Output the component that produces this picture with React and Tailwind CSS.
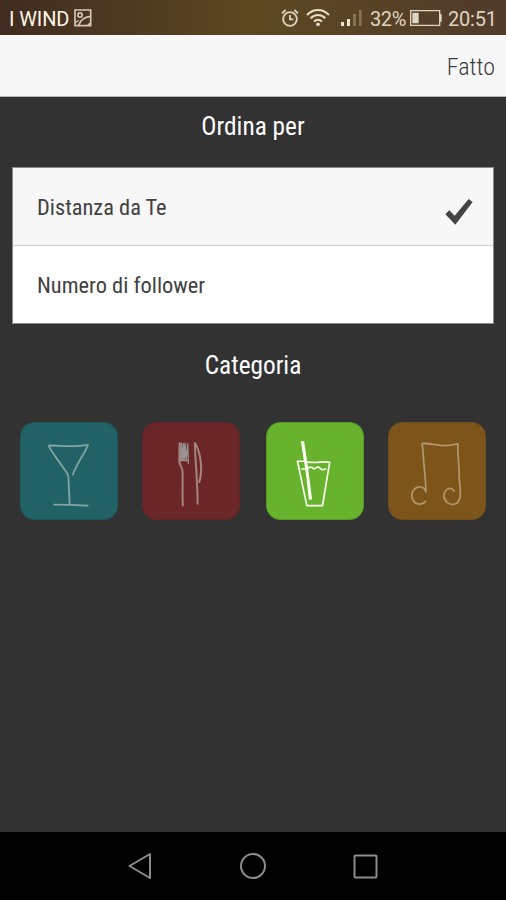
import React, { useState } from 'react';

const CocktailIcon = () => (
  <svg viewBox="30 36 294 294" className="w-full h-full" fill="none" stroke="#86a3a3" strokeWidth="5.5" strokeLinecap="round" strokeLinejoin="round">
    <path d="M189 194 C196 174 208 153 219 135 C225 124 232 113 235 103 C218 106 195 107 176 107 C155 107 135 104 115 105 C117 113 125 123 134 137 L164 179 C171 188 174 192 175 200 C176 228 178 256 179 285" />
    <path d="M132 286 C166 286 200 287 234 289" />
  </svg>
);

const CutleryIcon = () => (
  <svg viewBox="31 36 294 294" className="w-full h-full" fill="none" stroke="#a58482" strokeWidth="6" strokeLinecap="round" strokeLinejoin="round">
    <path stroke="#999292" strokeWidth="4" d="M143 98 L143 160 M143 100 L147 150 L149 98 L152 150 L155 99 L157 150 L160 98 L163 152 L168 99 L170 160 M145 150 L168 151" />
    <path d="M143 98 L142 154 C144 166 151 172 152 182 C153 216 151 252 153 289" />
    <path d="M203 217 C210 200 211 167 206 142 C202 121 196 106 190 97 C190 126 193 160 195 193 C196 225 199 254 198 283" />
  </svg>
);

const DrinkIcon = () => (
  <svg viewBox="32 36 294 294" className="w-full h-full" fill="none" stroke="#fafff2" strokeWidth="5" strokeLinecap="round" strokeLinejoin="round">
    <path d="M147 153 L125 153 L129 170 L154 289 L202 289 L224 156 C208 153 194 157 180 157 L154 156" />
    <path d="M139 177 L156 176 C161 170 168 169 174 175 C178 180 184 169 189 171 C195 173 196 179 203 179 L212 177" />
    <path fill="#fafff2" strokeWidth="4" d="M138 94 L144 94 L154 160 L168 268 L162 269 L153 190 Z" />
  </svg>
);

const MusicIcon = () => (
  <svg viewBox="30 36 294 294" className="w-full h-full" fill="none" stroke="#b1946a" strokeWidth="5.5" strokeLinecap="round" strokeLinejoin="round">
    <path d="M142 276 C133 287 115 287 106 276 C96 264 99 246 109 237 C121 227 140 231 143 247 C143 204 135 156 134 120 L131 99 C157 97 180 106 205 105 C218 104 231 102 241 100 C239 128 245 164 245 195 C245 226 253 251 246 268 C241 287 221 290 208 279 C195 268 196 249 207 240 C216 233 225 237 230 244" />
  </svg>
);

const AlarmIcon = () => (
  <svg viewBox="0 0 54 54" className="w-[18px] h-[18px]" fill="none" stroke="#dfd5bd" strokeWidth="5.5">
    <circle cx="27" cy="30" r="20.5" />
    <path d="M27 18 V31 H37 M3 13 L14 3 M40 3 L51 13" />
  </svg>
);

const WifiIcon = () => (
  <svg viewBox="0 0 72 54" className="w-6 h-[18px]" fill="none" stroke="#e8dec8" strokeWidth="6">
    <path d="M3 18 C22 -2 50 -2 69 18 M14 28 C26 15 46 15 58 28 M24 38 C31 30 41 30 48 38" />
    <circle cx="36" cy="46" r="5.5" fill="#e8dec8" stroke="none" />
  </svg>
);

const SignalIcon = () => (
  <svg viewBox="0 0 63 54" className="w-[21px] h-[18px]">
    <path fill="#eee5cf" d="M0 39 H9 V51 H0 Z M18 30 H27 V51 H18 Z" />
    <path fill="#85734b" d="M36 15 H45 V51 H36 Z M54 3 H62 V51 H54 Z" />
  </svg>
);

const BatteryIcon = () => (
  <svg viewBox="0 0 96 48" className="w-8 h-4">
    <path fill="none" stroke="#ded4c0" strokeWidth="4" d="M2 2 H89 V46 H2 Z" />
    <path fill="#ded4c0" d="M7 8 H26 V40 H7 Z M90 13 H95 V35 H90 Z" />
  </svg>
);

const PictureIcon = () => (
  <svg viewBox="0 0 54 54" className="w-[18px] h-[18px]" fill="none" stroke="#d3c7b5" strokeWidth="5">
    <path d="M3 3 H50 V50 H3 Z M14 49 C19 33 32 24 49 22" />
    <path d="M3 42 L14 34" strokeWidth="3.5" />
    <path d="M36 50 L50 38 V50 Z" fill="#d3c7b5" stroke="none" />
    <circle cx="18" cy="18" r="6.5" />
  </svg>
);

const categories = [
  { id: 'cocktail', icon: CocktailIcon, style: 'bg-[#206265] border-[#205659]' },
  { id: 'food', icon: CutleryIcon, style: 'bg-[#6b2727] border-[#602626]' },
  { id: 'drink', icon: DrinkIcon, style: 'bg-[#67b32d] border-[#579827] ml-0.5' },
  { id: 'music', icon: MusicIcon, style: 'bg-[#7d551b] border-[#714e1d]' },
];

const sortOptions = ['Distanza da Te', 'Numero di follower'];

const App = () => {
  const [selected, setSelected] = useState(0);

  return (
    <div className="w-[506px] h-[900px] flex flex-col overflow-hidden bg-[#323232] font-['Roboto','Liberation_Sans',sans-serif]">
      {/* Status bar */}
      <div className="h-[35px] shrink-0 flex items-center pl-[9px] pr-[10px] pt-[1px] bg-linear-to-r from-[#402c20] via-[#5c4820] to-[#513b2b]">
        <span className="w-[60px] mt-px text-[20px] leading-none tracking-[-0.1px] text-[#fdf6e8] whitespace-nowrap">I WIND</span>
        <div className="ml-[5px]"><PictureIcon /></div>
        <div className="ml-auto flex items-center text-[#ded4c0] text-[20px] leading-none">
          <AlarmIcon />
          <div className="ml-[7px]"><WifiIcon /></div>
          <div className="ml-[11px]"><SignalIcon /></div>
          <span className="ml-2 w-[38px] mt-px tracking-[-0.4px]">32%</span>
          <div className="ml-[2px]"><BatteryIcon /></div>
          <span className="ml-[6px] w-[48px] mt-px tracking-[-0.2px]">20:51</span>
        </div>
      </div>

      {/* Header */}
      <div className="h-[62px] shrink-0 flex items-center justify-end pt-[2px] pr-[11px] bg-[#f7f7f7] border-b border-[#b5b5b5]">
        <button className="text-[24px] leading-none font-light text-[#3c3c3c] [font-stretch:75%]">Fatto</button>
      </div>

      <main className="flex-1 [font-stretch:75%]">
        <h2 className="h-[70px] pt-[15px] text-center text-[25.3px] leading-[30px] text-white">Ordina per</h2>

        <div className="mx-3 h-[157px] border border-[#8c8c8c] bg-white">
          {sortOptions.map((label, i) => (
            <button
              key={label}
              onClick={() => setSelected(i)}
              className={`w-full flex items-center justify-between pl-6 pr-5 text-[22.4px] leading-none text-[#414141] ${i === 0 ? 'h-[78px] pt-[2px] bg-[#f7f7f7] border-b border-[#d0d0d0]' : 'h-[77px] pt-px'}`}
            >
              <span>{label}</span>
              {selected === i && (
                <svg viewBox="0 0 82 78" className="w-[28px] h-[26px] mt-[9px]" fill="#444">
                  <path d="M0 46 L12 34 L28 50 L70 0 L82 9 L30 77 Z" />
                </svg>
              )}
            </button>
          ))}
        </div>

        <h2 className="h-[98px] pt-[27px] text-center text-[25.3px] leading-[30px] text-white">Categoria</h2>

        <div className="flex gap-6 pl-5">
          {categories.map(({ id, icon: Icon, style }) => (
            <button key={id} className={`w-[98px] h-[98px] shrink-0 rounded-[14px] border ${style}`}>
              <Icon />
            </button>
          ))}
        </div>
      </main>

      {/* Navigation bar */}
      <div className="h-[68px] shrink-0 flex items-center justify-center gap-[86px] bg-black">
        <svg viewBox="0 0 26 28" className="w-[26px] h-7" fill="none" stroke="#8c8c8c" strokeWidth="2" strokeLinejoin="round">
          <path d="M23 2 V26 L2.5 14 Z" />
        </svg>
        <svg viewBox="0 0 28 28" className="w-7 h-7" fill="none" stroke="#8c8c8c" strokeWidth="2">
          <circle cx="14" cy="14" r="12" />
        </svg>
        <svg viewBox="0 0 26 28" className="w-[26px] h-7" fill="none" stroke="#8c8c8c" strokeWidth="2">
          <rect x="1.5" y="3.5" width="22" height="22" rx="1" />
        </svg>
      </div>
    </div>
  );
};

export default App;
